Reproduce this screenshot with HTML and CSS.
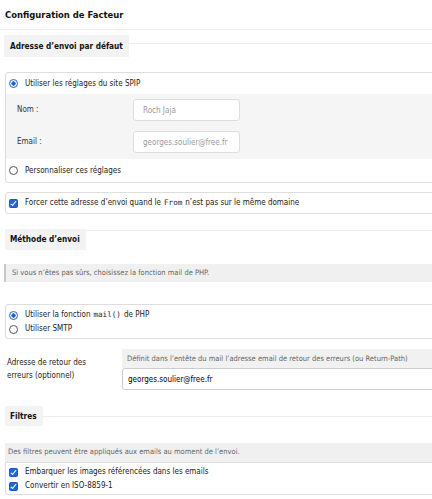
FILE: index.html
```html
<!DOCTYPE html>
<html lang="fr">
<head>
<meta charset="utf-8">
<title>Configuration de Facteur</title>
<link rel="stylesheet" href="styles.css">
</head>
<body>
<main class="page">
  <h1 class="title">Configuration de Facteur</h1>

  <div class="legend-row legend-row-first">
    <h2 class="legend">Adresse d’envoi par défaut</h2>
    <span class="legend-line line-mid"></span>
  </div>

  <div class="box box-sender">
    <label class="choice choice-top"><input class="radio" type="radio" name="envoi" checked>Utiliser les réglages du site SPIP</label>
    <div class="subpanel">
      <div class="field">
        <span class="field-label">Nom :</span>
        <input class="text-input" type="text" placeholder="Roch Jaja">
      </div>
      <div class="field">
        <span class="field-label">Email :</span>
        <input class="text-input" type="text" placeholder="georges.soulier@free.fr">
      </div>
    </div>
    <label class="choice choice-bottom"><input class="radio" type="radio" name="envoi">Personnaliser ces réglages</label>
  </div>

  <div class="box box-force">
    <label class="choice choice-single"><input class="check" type="checkbox" checked>Forcer cette adresse d’envoi quand le <code class="mono">From</code> n’est pas sur le même domaine</label>
  </div>

  <div class="legend-row legend-row-method">
    <h2 class="legend legend-short">Méthode d’envoi</h2>
    <span class="legend-line line-top"></span>
  </div>

  <p class="hint hint-bar">Si vous n’êtes pas sûrs, choisissez la fonction mail de PHP.</p>

  <div class="box box-method">
    <label class="choice choice-line"><input class="radio" type="radio" name="methode" checked>Utiliser la fonction <code class="mono">mail()</code> de PHP</label>
    <label class="choice choice-line"><input class="radio" type="radio" name="methode">Utiliser SMTP</label>
  </div>

  <div class="return-row">
    <label class="return-label">Adresse de retour des erreurs (optionnel)</label>
    <div class="return-col">
      <p class="hint hint-plain">Définit dans l’entête du mail l’adresse email de retour des erreurs (ou Return-Path)</p>
      <input class="wide-input" type="text" value="georges.soulier@free.fr">
    </div>
  </div>

  <div class="legend-row legend-row-filters">
    <h2 class="legend legend-short">Filtres</h2>
    <span class="legend-line line-low"></span>
  </div>

  <p class="hint hint-filters">Des filtres peuvent être appliqués aux emails au moment de l’envoi.</p>
  <div class="box box-filters">
    <label class="choice choice-line"><input class="check" type="checkbox" checked>Embarquer les images référencées dans les emails</label>
    <label class="choice choice-line"><input class="check" type="checkbox" checked>Convertir en ISO-8859-1</label>
  </div>
</main>
</body>
</html>
```

FILE: styles.css
```css
* { box-sizing: border-box; }

html, body {
  margin: 0;
  padding: 0;
}

body {
  width: 432px;
  height: 499px;
  overflow: hidden;
  background: #fff;
  color: #222;
  font-family: "DejaVu Sans Condensed", "Liberation Sans", sans-serif;
  font-stretch: condensed;
  font-size: 8px;
  line-height: 14px;
}

.page {
  display: flex;
  flex-direction: column;
}

.title {
  margin: 0;
  height: 30px;
  padding-left: 5px;
  font-size: 9.4px;
  font-weight: bold;
  line-height: 29px;
  color: #111;
  border-bottom: 1px solid #eeeeee;
}

/* section legends */
.legend-row {
  display: flex;
  align-items: flex-start;
}
.legend-row-first { margin-top: 5px; }
.legend-row-method { margin-top: 15px; }
.legend-row-filters { margin-top: 16px; }

.legend {
  margin: 0 0 0 5px;
  height: 22px;
  padding: 0 6px 0 5px;
  background: #f3f3f3;
  font-size: 8.2px;
  font-weight: bold;
  line-height: 22px;
  color: #111;
}
.legend-row-first .legend { margin-left: 4px; padding-left: 6px; }
.legend-short { height: 21px; line-height: 21px; }
.legend-row-filters .legend { height: 20px; line-height: 20px; }

.legend-line {
  flex: 1;
  height: 1px;
  background: #ececec;
}
.line-mid { margin-top: 8px; }
.line-top { margin-top: 1px; }
.line-low { margin-top: 10px; }

/* bordered boxes */
.box {
  margin-left: 5px;
  margin-right: -10px;
  border: 1px solid #dddddd;
  border-radius: 3px;
}
.box-sender { margin-top: 15px; }
.box-force { margin-top: 9px; }
.box-method { margin-top: 22px; padding: 3px 0 2px; }
.box-filters { padding: 2px 0 1px; border-radius: 0 0 3px 3px; }

.choice {
  display: flex;
  align-items: center;
  padding-left: 3px;
  color: #222;
}
.choice-top { height: 21px; }
.choice-bottom { height: 23px; }
.choice-single { height: 20px; }
.choice-line { height: 14px; }

.radio {
  appearance: none;
  -webkit-appearance: none;
  flex: none;
  width: 9px;
  height: 9px;
  margin: 0 7px 0 0;
  border: 1px solid #555;
  border-radius: 50%;
  background: #fff;
}
.radio:checked {
  border-color: #1f62d2;
  background: radial-gradient(circle, #1f62d2 0 1.9px, #fff 2.4px);
}

.check {
  appearance: none;
  -webkit-appearance: none;
  position: relative;
  flex: none;
  width: 9px;
  height: 9px;
  margin: 0 7px 0 0;
  border: 1px solid #1b57bd;
  border-radius: 1.5px;
  background: #2466d4;
}
.check:checked::after {
  content: "";
  position: absolute;
  left: 2.2px;
  top: 0.3px;
  width: 2.4px;
  height: 4.6px;
  border-right: 1.3px solid #fff;
  border-bottom: 1.3px solid #fff;
  transform: rotate(40deg);
}

.mono {
  font-family: "DejaVu Sans Mono", "Liberation Mono", monospace;
  font-size: 7.6px;
  margin: 0 3px;
  color: #222;
}

/* grey sub panel with fields */
.subpanel {
  display: flex;
  flex-direction: column;
  gap: 10px;
  padding: 5px 0 6px;
  background: #f5f5f5;
}
.field {
  display: flex;
  align-items: center;
  height: 22px;
}
.field-label {
  width: 127px;
  padding-left: 11px;
  color: #333;
}
.text-input {
  width: 107px;
  height: 22px;
  padding: 0 9px;
  border: 1px solid #dddddd;
  border-radius: 3px;
  background: #fff;
  font: inherit;
  color: #333;
  outline: none;
}
.text-input::placeholder { color: #999; }

/* hints */
.hint {
  margin: 0;
  font-size: 7.5px;
  color: #666;
}
.hint-bar {
  margin-top: 14px;
  margin-left: 4px;
  height: 18px;
  padding-left: 6px;
  line-height: 18px;
  background: #f0f0f0;
  border-left: 2px solid #c8c8c8;
}
.hint-plain {
  height: 19px;
  padding-left: 5px;
  line-height: 19px;
  background: #f1f1f1;
}
.hint-filters {
  margin-top: 17px;
  margin-left: 5px;
  height: 19px;
  padding-left: 3px;
  line-height: 18px;
  background: #f0f0f0;
}

/* return path row */
.return-row {
  display: flex;
  margin-top: 10px;
}
.return-label {
  width: 122px;
  padding: 7px 30px 0 7px;
  font-size: 8px;
  line-height: 13px;
  color: #222;
}
.return-col {
  flex: 1;
  margin-right: -10px;
  display: flex;
  flex-direction: column;
}
.wide-input {
  height: 22px;
  padding: 0 5px;
  border: 1px solid #cccccc;
  border-radius: 3px;
  background: #fff;
  font: inherit;
  font-size: 8px;
  color: #000;
  outline: none;
}
```
